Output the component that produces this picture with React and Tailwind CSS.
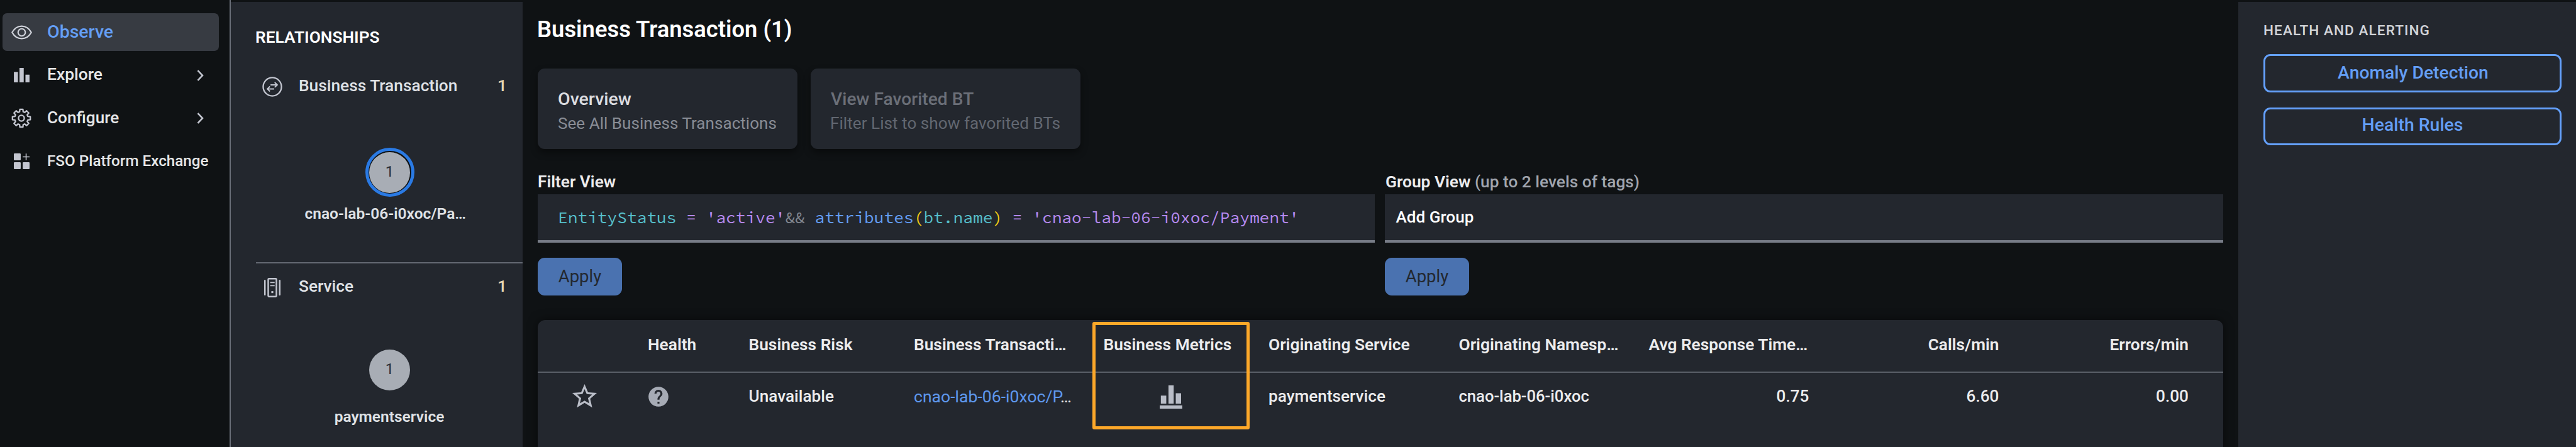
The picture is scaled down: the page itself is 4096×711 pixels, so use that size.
import React from 'react';

const toothed = () => {
  const pts = [];
  for (let i = 0; i < 8; i++) {
    const a = (i * Math.PI) / 4 - Math.PI / 2;
    [[-0.27, 10.6], [-0.17, 14.4], [0.17, 14.4], [0.27, 10.6]].forEach(([d, r]) => {
      pts.push(`${(16 + r * Math.cos(a + d)).toFixed(2)} ${(16 + r * Math.sin(a + d)).toFixed(2)}`);
    });
  }
  return 'M' + pts.join('L') + 'Z';
};
const GEAR = toothed();

const EyeIcon = () => (
  <svg className="h-[23px] w-[33px]" viewBox="0 0 106 72" fill="none" stroke="#cfd2da" strokeWidth="7">
    <path d="M4 36C16 14 34 4 53 4s37 10 49 32c-12 22-30 32-49 32S16 58 4 36Z" strokeLinejoin="round" />
    <circle cx="53" cy="36" r="18.5" />
  </svg>
);
const BarsIcon = () => (
  <svg className="h-[23px] w-[25px]" viewBox="0 0 81 75" fill="#c3c6d0">
    <path d="M0 21h21v54H0zM29 0h22v75H29zM60 35h21v40H60z" />
  </svg>
);
const GearIcon = () => (
  <svg className="size-[32px]" viewBox="0 0 32 32" fill="none" stroke="#c3c6d0" strokeWidth="2.3" strokeLinejoin="round">
    <path d={GEAR} />
    <circle cx="16" cy="16" r="4.6" />
  </svg>
);
const GridIcon = () => (
  <svg className="size-[25px]" viewBox="0 0 80 80" fill="#c3c6d0">
    <rect width="35" height="35" rx="4" />
    <rect y="45" width="35" height="35" rx="4" />
    <rect x="45" y="45" width="35" height="35" rx="4" />
    <path d="M45 15h15V1h5v14h15v5H65v14h-5V20H45z" />
  </svg>
);
const Chevron = () => (
  <svg className="h-[18px] w-[11px]" viewBox="0 0 11 18" fill="none" stroke="#c3c6d0" strokeWidth="2.6">
    <path d="M1.5 1.2 9 9l-7.5 7.8" />
  </svg>
);
const SwapIcon = () => (
  <svg className="size-[32px]" viewBox="0 0 33 33" fill="none" stroke="#c3c6d0" strokeWidth="2.4">
    <circle cx="16.5" cy="16.5" r="15" />
    <path d="M13.5 13.3h10.5M20.4 9.2l4.2 4.1-4.2 4.1M19.5 20H9M12.6 15.9 8.4 20l4.2 4.1" strokeWidth="2.1" />
  </svg>
);
const ServiceIcon = () => (
  <svg className="h-[31px] w-[28px]" viewBox="0 0 88 100" fill="none" stroke="#c3c6d0">
    <path d="M6 14v72M82 14v72" strokeWidth="8" strokeLinecap="round" />
    <rect x="23" y="4" width="42" height="92" rx="4" strokeWidth="8" />
    <path d="M33 24h23M33 40h23" strokeWidth="6" />
    <rect x="39" y="68" width="10" height="10" fill="#c3c6d0" stroke="none" />
  </svg>
);
const StarIcon = () => (
  <svg className="size-[47px]" viewBox="0 0 24 24" fill="#b9bdc7">
    <path d="M22 9.24l-7.19-.62L12 2 9.19 8.63 2 9.24l5.46 4.73L5.82 21 12 17.27 18.18 21l-1.63-7.03L22 9.24zM12 15.4l-3.76 2.27 1-4.28-3.32-2.88 4.38-.38L12 6.1l1.71 4.04 4.38.38-3.32 2.88 1 4.28L12 15.4z" />
  </svg>
);
const HelpIcon = () => (
  <svg className="size-[38px]" viewBox="0 0 24 24" fill="#a6abb5">
    <path d="M12 2C6.48 2 2 6.48 2 12s4.48 10 10 10 10-4.48 10-10S17.52 2 12 2zm1 17h-2v-2h2v2zm2.07-7.75l-.9.92C13.45 12.9 13 13.5 13 15h-2v-.5c0-1.1.45-2.1 1.17-2.83l1.24-1.26c.37-.36.59-.86.59-1.41 0-1.1-.9-2-2-2s-2 .9-2 2H8c0-2.21 1.79-4 4-4s4 1.79 4 4c0 .88-.36 1.68-.93 2.25z" />
  </svg>
);
const MetricsIcon = () => (
  <svg className="h-[37px] w-[36px]" viewBox="0 0 38 39.3" fill="#b9bdc7">
    <path d="M1.8 17.3h9.2v13.4H1.8zM14.7 0h8.8v30.7h-8.8zM27 13.3h9v17.4h-9zM0 33.7h38v5.6H0z" />
  </svg>
);

const NavItem = ({ icon, label, arrow, active, size }) => (
  <div className={'flex h-[60px] w-[344px] items-center rounded-[7px] pl-3 ' + (active ? 'bg-[#373b42]' : '')}>
    <span className="flex w-[36px] shrink-0 justify-center">{icon}</span>
    <span className={'ml-[23px] font-medium ' + size + (active ? ' text-[#649ef5]' : ' -mt-[1px] text-[#e6e7e8]')}>{label}</span>
    {arrow && <span className="mr-[24px] ml-auto"><Chevron /></span>}
  </div>
);

const Section = ({ icon, label, className }) => (
  <div className={'flex h-[40px] items-center pl-[9px] pr-[25px] ' + className}>
    <span className="flex w-[36px] shrink-0 justify-center">{icon}</span>
    <span className="-mt-[2px] ml-[24px] text-[26.3px] font-medium text-[#dfe1e5]">{label}</span>
    <span className="-mt-[2px] ml-auto text-[26.3px] font-medium text-[#e8d6b4]">1</span>
  </div>
);

const Apply = () => (
  <button className="mt-6 flex h-[60px] w-[134px] items-center justify-center rounded-[11px] bg-[#4a72b0] text-[27.5px] text-[#23282f]">Apply</button>
);

const COLS = 'grid grid-cols-[175px_160.5px_262.5px_301.5px_262.5px_302.5px_302px_301px_302px_1fr]';

export default function App() {
  return (
    <div className="flex h-[711px] w-[4096px] overflow-hidden bg-[#0f1214] font-['Roboto',sans-serif] whitespace-nowrap text-[#ececed]">
      <nav className="flex w-[367px] shrink-0 flex-col gap-[8.5px] border-r-2 border-[#6a6f79] pl-1 pt-[21px]">
        <NavItem active icon={<EyeIcon />} label="Observe" size="text-[28.5px]" />
        <NavItem arrow icon={<BarsIcon />} label="Explore" size="text-[26.4px]" />
        <NavItem arrow icon={<GearIcon />} label="Configure" size="text-[26.2px]" />
        <NavItem icon={<GridIcon />} label="FSO Platform Exchange" size="text-[24.24px]" />
      </nav>

      <aside className="mt-[3px] w-[464px] shrink-0 bg-[#23272e] pl-[39px]">
        <h2 className="mt-[40px] text-[26.3px] leading-[32px] font-semibold text-white">RELATIONSHIPS</h2>
        <Section className="mt-[43px]" icon={<SwapIcon />} label="Business Transaction" />
        <div className="ml-[174.5px] mt-[77px] flex size-[78px] items-center justify-center rounded-full border-[5px] border-[#2a7ae4] bg-[#0f1214] p-[1.5px]">
          <div className="flex size-full items-center justify-center rounded-full bg-[#a8adb5] pb-[3px] text-[24px] text-[#2a2f3a]">1</div>
        </div>
        <div className="ml-[78.5px] mt-[10px] h-[34px] w-[270px] text-[24.5px] leading-[34px] font-semibold text-[#dfe1e5]">cnao-lab-06-i0xoc/Pa…</div>
        <div className="mt-[60px] ml-[1px] h-[2px] bg-[#646973]" />
        <Section className="mt-[18px]" icon={<ServiceIcon />} label="Service" />
        <div className="ml-[181px] mt-[79px] flex size-[65px] items-center justify-center rounded-full bg-[#a8adb5] pb-[3px] text-[24px] text-[#2a2f3a]">1</div>
        <div className="ml-[79.5px] mt-[25px] h-[34px] w-[267px] text-center text-[24.5px] leading-[34px] font-semibold text-[#dfe1e5]">paymentservice</div>
      </aside>

      <main className="w-[2728px] shrink-0 pl-[24px] pr-[24px] pt-[25px]">
        <h1 className="-ml-px text-[36.4px] leading-[44px] font-semibold text-white">Business Transaction (1)</h1>
        <div className="mt-[40px] flex gap-[21px]">
          <div className="h-[128px] w-[413px] rounded-[11px] bg-[#23272e] pl-[32px] pt-[30px] shadow-[0_6px_12px_rgba(0,0,0,0.4)]">
            <div className="text-[28.5px] leading-[38px] font-medium text-[#dcdde0]">Overview</div>
            <div className="text-[26.1px] leading-[38px] text-[#888c95]">See All Business Transactions</div>
          </div>
          <div className="h-[128px] w-[429px] rounded-[11px] bg-[#23272e] pl-[31px] pt-[30px] shadow-[0_6px_12px_rgba(0,0,0,0.4)]">
            <div className="pl-px text-[28.2px] leading-[38px] font-medium text-[#6b6f78]">View Favorited BT</div>
            <div className="text-[26.2px] leading-[38px] text-[#626771]">Filter List to show favorited BTs</div>
          </div>
        </div>

        <div className="mt-[36px] flex gap-[16px]">
          <section className="w-[1331px]">
            <div className="text-[26.2px] leading-[32px] font-semibold">Filter View</div>
            <div className="mt-[4px] flex h-[77px] items-center border-b-4 border-[#777c87] bg-[#23272e] pl-[32px] font-['Source_Code_Pro','Liberation_Mono',monospace] text-[26.2px] whitespace-pre">
              <span className="text-[#56bfcb]">EntityStatus </span>
              <span className="text-[#b78af0]">= 'active'</span>
              <span className="text-[#80858e]">&amp;&amp; </span>
              <span className="text-[#649ef5]">attributes</span>
              <span className="text-[#f0cc14]">(</span>
              <span className="text-[#56bfcb]">bt.name</span>
              <span className="text-[#f0cc14]">) </span>
              <span className="text-[#b78af0]">= 'cnao-lab-06-i0xoc/Payment'</span>
            </div>
            <Apply />
          </section>
          <section className="flex-1">
            <div className="pl-px text-[26.3px] leading-[32px] font-semibold">Group View <span className="font-medium text-[#a0a5ae]">(up to 2 levels of tags)</span></div>
            <div className="mt-[4px] flex h-[77px] items-center border-b-4 border-[#777c87] bg-[#23272e] pl-[17.5px] text-[26.1px] font-medium text-white">Add Group</div>
            <Apply />
          </section>
        </div>

        <div className="relative mt-[39px] h-[230px] rounded-t-[12px] bg-[#23272e] shadow-[0_0_16px_rgba(0,0,0,0.5)]">
          <div className={COLS + ' h-[84px] items-center border-b-2 border-[#5a5f68] pb-[2px] text-[26.3px] font-semibold'}>
            <span />
            <span>Health</span>
            <span>Business Risk</span>
            <span>Business Transacti…</span>
            <span>Business Metrics</span>
            <span>Originating Service</span>
            <span>Originating Namesp…</span>
            <span>Avg Response Time…</span>
            <span className="pr-[46px] text-right">Calls/min</span>
            <span className="pr-[55px] text-right">Errors/min</span>
          </div>
          <div className={COLS + ' h-[75px] items-center text-[26.2px] font-medium'}>
            <span className="pl-[51px]"><StarIcon /></span>
            <span className="-ml-[2px]"><HelpIcon /></span>
            <span>Unavailable</span>
            <span className="text-[26.6px] font-normal"><a className="text-[#5e98ee]">cnao-lab-06-i0xoc/P</a>…</span>
            <span className="pl-[89px] pt-[2px]"><MetricsIcon /></span>
            <span>paymentservice</span>
            <span className="text-[25.6px]">cnao-lab-06-i0xoc</span>
            <span className="pr-[46px] text-right">0.75</span>
            <span className="pr-[46px] text-right">6.60</span>
            <span className="pr-[55px] text-right">0.00</span>
          </div>
          <div className="absolute left-[882px] top-[3px] h-[171px] w-[250px] rounded-[3px] border-[5px] border-[#fda829]" />
        </div>
      </main>

      <aside className="mt-[3px] flex-1 bg-[#23272e] pl-[40px] pr-[23px]">
        <h2 className="mt-[30px] text-[22.6px] leading-[32px] font-medium tracking-[1.05px] text-[#d2d4d8]">HEALTH AND ALERTING</h2>
        <button className="mt-[20.5px] flex h-[61.5px] w-full items-center justify-center rounded-[11px] border-[3.5px] border-[#64a0fa] pl-[2px] text-[28.3px] font-medium text-[#649ef5]">Anomaly Detection</button>
        <button className="mt-[23.5px] flex h-[60.5px] w-full items-center justify-center rounded-[11px] border-[3.5px] border-[#64a0fa] pb-[2px] text-[28.4px] font-medium text-[#649ef5]">Health Rules</button>
      </aside>
    </div>
  );
}
